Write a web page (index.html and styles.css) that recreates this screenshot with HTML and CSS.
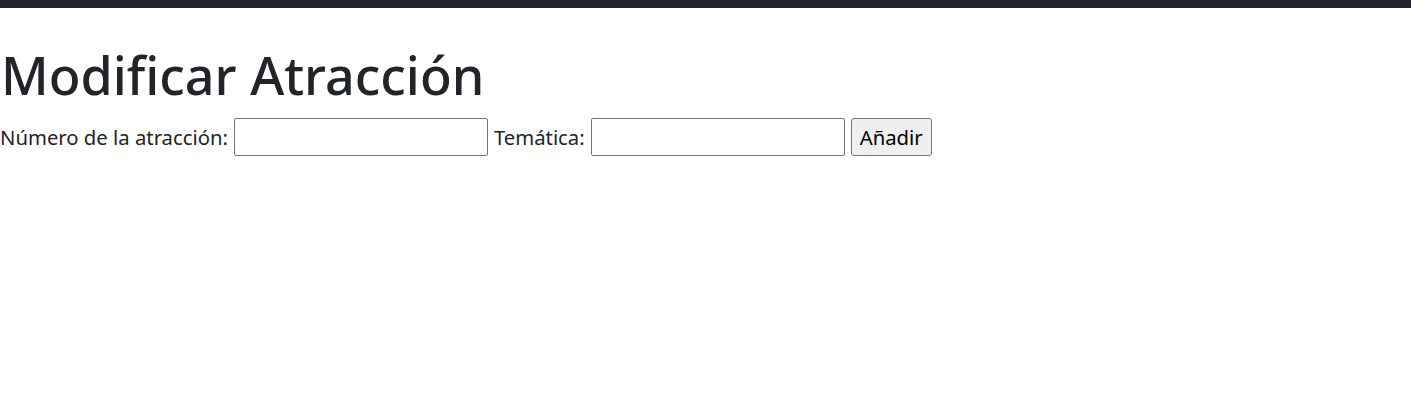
FILE: index.html
```html
<!DOCTYPE html>
<html lang="es">
<head>
<meta charset="utf-8">
<title>Modificar Atracción</title>
<link rel="stylesheet" href="styles.css">
</head>
<body>
<nav class="topbar"></nav>
<main class="content">
  <h1 class="title">Modificar Atracción</h1>
  <form class="row">
    <label class="lbl" for="num">Número de la atracción:</label>
    <input class="field" id="num" type="text">
    <label class="lbl" for="tem">Temática:</label>
    <input class="field" id="tem" type="text">
    <button class="btn" type="button">Añadir</button>
  </form>
</main>
</body>
</html>
```
FILE: styles.css
```css
* { box-sizing: border-box; }
body {
  margin: 0;
  font-family: "Noto Sans", "Open Sans", sans-serif;
  color: #212529;
  background: #fff;
}
.topbar {
  height: 8px;
  background: #212529;
}
.content {
  padding-top: 36px;
}
.title {
  margin: 0 0 12px 0;
  font-size: 52px;
  font-weight: 500;
  line-height: 1.2;
  padding-left: 1px;
}
.row {
  display: flex;
  align-items: center;
  gap: 6px;
  margin: 0;
  font-size: 20.3px;
}
.lbl {
  color: #212529;
}
.field {
  width: 254px;
  height: 38px;
  border: 1px solid #767676;
  border-radius: 2px;
  background: #fff;
  margin: 0;
}
.btn {
  height: 38px;
  padding: 0 8px;
  font: inherit;
  color: #000;
  background: #efefef;
  border: 1px solid #767676;
  border-radius: 3px;
}
```
